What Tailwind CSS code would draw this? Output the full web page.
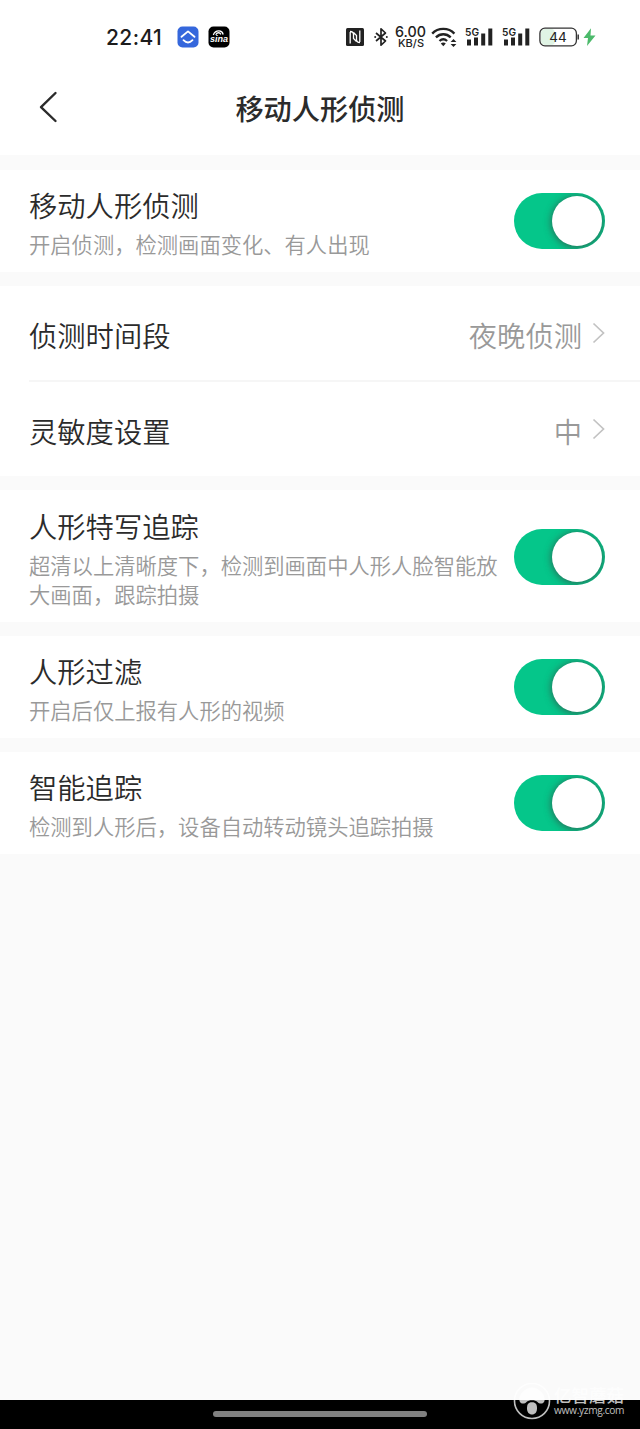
<!DOCTYPE html>
<html lang="zh-CN">
<head>
    <meta charset="UTF-8" />
    <meta name="viewport" content="width=device-width, initial-scale=1.0" />
    <title>移动人形侦测</title>
    <script src="https://cdn.jsdelivr.net/npm/@tailwindcss/browser@4"></script>
</head>
<body class="bg-[#fafafa] font-['Noto_Sans_CJK_SC',sans-serif] font-[350] text-[#2b2b2b]">

<div class="relative w-[640px] h-[1429px] flex flex-col overflow-hidden">

    <!-- Status bar -->
    <div class="h-[74px] shrink-0 bg-white flex items-center pl-[106px] font-['Inter','Liberation_Sans',sans-serif] text-[#1c1c1c]">
        <span class="w-[71px] text-[21px] leading-none font-medium tracking-[0.4px]">22:41</span>
        <svg class="w-[22px] h-[22px]" viewBox="0 0 22 22">
            <rect x="0.5" y="0.5" width="21" height="21" rx="5" fill="#3567dc" />
            <path d="M4.5 10.8 11 5.4l6.5 5.4M6.5 14.2Q11 18.8 15.5 14.2" fill="none" stroke="#fff" stroke-width="1.8" stroke-linecap="round" stroke-linejoin="round" />
        </svg>
        <svg class="ml-[9px] w-[22px] h-[22px]" viewBox="0 0 22 22">
            <rect x="0.5" y="0.5" width="21" height="21" rx="5" fill="#000" />
            <path d="M5.5 8.5C7.5 4 14 3.6 15 8M8 8.3c1.2-2 4-2 4.6-.3" fill="none" stroke="#fff" stroke-width="1.3" stroke-linecap="round" />
            <text x="11" y="15.5" text-anchor="middle" font-family="Liberation Sans" font-size="9" font-weight="700" font-style="italic" fill="#fff">sina</text>
        </svg>

        <svg class="ml-[115px] w-[20px] h-[20px]" viewBox="0 0 20 20">
            <rect x="1" y="1" width="18" height="18" rx="1.5" fill="#222" />
            <path d="M5.2 16.5V5M5 4.5c2.500 0 3.500 1 3.500 3v4l3 3M14.800 3.500V15M15 15.500c-2.500 0-3.500-1-3.500-3v-4l-3-3" fill="none" stroke="#fff" stroke-width="1.3" />
        </svg>
        <svg class="ml-[8px] w-[16px] h-[20px]" viewBox="0 0 16 20">
            <path d="M3 6l9.5 8L8 18.2V1.8L12.5 6 3 14" fill="none" stroke="#222" stroke-width="1.7" stroke-linejoin="round" />
            <circle cx="2.2" cy="10" r="1" fill="#222" />
            <circle cx="13.8" cy="10" r="1" fill="#222" />
        </svg>
        <svg class="ml-[4px] w-[34px] h-[26px]" viewBox="0 0 34 26">
            <text x="2" y="13.2" font-family="Inter" font-size="14.5" font-weight="500" textLength="31" lengthAdjust="spacingAndGlyphs" fill="#222">6.00</text>
            <text x="5" y="23.3" font-family="Inter" font-size="10.5" font-weight="500" textLength="26" lengthAdjust="spacingAndGlyphs" fill="#222">KB/S</text>
        </svg>
        <svg class="ml-[4px] w-[27px] h-[20px]" viewBox="0 0 27 20">
            <path d="M1.2 6.6C7 .4 17.6 .4 23.4 6.6M4.9 10.4c4.3-4.2 10.5-4.2 14.8 0M8.5 14c2.3-2.1 5.3-2.1 7.6 0" fill="none" stroke="#222" stroke-width="2.3" />
            <path d="M12.3 19.2 9.8 16.5c1.5-1.3 3.5-1.3 5 0z" fill="#222" />
            <path d="M22.5 12l2.9 3h-5.800zM22.500 20l-2.900-3h5.800z" fill="#222" />
        </svg>
        <svg class="ml-[7px] w-[30px] h-[20px]" viewBox="0 0 30 20">
            <text x="0" y="8.5" font-family="Inter" font-size="10.5" font-weight="600" textLength="14" lengthAdjust="spacingAndGlyphs" fill="#222">5G</text>
            <path d="M2 12.5h4v6h-4zM9 10.5h4v8h-4zM16.2 6.5h4v12h-4zM23.3 1.5h4v17h-4z" fill="#222" />
        </svg>
        <svg class="ml-[7px] w-[30px] h-[20px]" viewBox="0 0 30 20">
            <text x="0" y="8.5" font-family="Inter" font-size="10.5" font-weight="600" textLength="14" lengthAdjust="spacingAndGlyphs" fill="#222">5G</text>
            <path d="M2 12.5h4v6h-4zM9 10.5h4v8h-4zM16.2 6.5h4v12h-4zM23.3 1.5h4v17h-4z" fill="#222" />
        </svg>
        <svg class="ml-[7px] w-[58px] h-[22px]" viewBox="0 0 58 22">
            <rect x="2" y="3" width="14" height="16" rx="4" fill="#e0f4e5" />
            <rect x="0.9" y="2.2" width="36.5" height="17.6" rx="5" fill="none" stroke="#333" stroke-width="1.3" />
            <path d="M39.2 8.500v5" stroke="#333" stroke-width="1.5" />
            <text x="19" y="15.8" text-anchor="middle" font-family="Inter" font-size="13.5" font-weight="400" fill="#222">44</text>
            <path d="M52 2.2 44.5 12h4.500l-1 8L56.500 9.500h-5z" fill="#4cba6b" />
        </svg>
    </div>

    <!-- Title bar -->
    <div class="h-[81px] shrink-0 bg-white grid grid-cols-[96px_1fr_96px] pb-[14px] items-center">
        <svg class="ml-[38px] mb-[2px] w-[20px] h-[32px]" viewBox="0 0 20 32">
            <path d="M17.5 2 3 16.2 17.5 30" fill="none" stroke="#2b2b2b" stroke-width="2.4" stroke-linecap="round" stroke-linejoin="round" />
        </svg>
        <h1 class="text-center text-[28.2px] leading-[40px] font-medium">移动人形侦测</h1>
    </div>

    <div class="mt-[15px] shrink-0 space-y-[14px]">
        <div class="h-[102px] bg-white flex items-center justify-between pl-[29px] pr-[35px]">
            <div>
                <h2 class="text-[28.3px] leading-[40px]">移动人形侦测</h2>
                <p class="mt-[4px] text-[21.3px] leading-[29px] text-[#999]">开启侦测，检测画面变化、有人出现</p>
            </div>
            <div class="w-[91px] h-[56px] rounded-full bg-[#05c68a] overflow-hidden flex justify-end p-[3px]">
                <div class="size-[50px] rounded-full bg-white shadow-[0_1px_7px_1px_rgba(60,60,60,0.6)]"></div>
            </div>
        </div>

        <div class="h-[190px] bg-white pl-[29px]">
            <div class="h-[96px] pt-[3px] pr-[35px] flex items-center border-b-2 border-[#f6f6f6]">
                <span class="text-[28.3px] leading-[40px]">侦测时间段</span>
                <span class="ml-auto text-[28.3px] leading-[40px] text-[#999]">夜晚侦测</span>
                <svg class="ml-[10px] mb-[3px] w-[13px] h-[22px]" viewBox="0 0 13 22">
                    <path d="M1.5 1.5 11.5 11l-10 9.5" fill="none" stroke="#c2c2c2" stroke-width="1.7" />
                </svg>
            </div>
            <div class="h-[94px] pt-[3px] pr-[35px] flex items-center">
                <span class="text-[28.3px] leading-[40px]">灵敏度设置</span>
                <span class="ml-auto text-[28.3px] leading-[40px] text-[#999]">中</span>
                <svg class="ml-[10px] mb-[3px] w-[13px] h-[22px]" viewBox="0 0 13 22">
                    <path d="M1.5 1.5 11.5 11l-10 9.5" fill="none" stroke="#c2c2c2" stroke-width="1.7" />
                </svg>
            </div>
        </div>

        <div class="h-[132px] pt-[2px] bg-white flex items-center justify-between pl-[29px] pr-[35px]">
            <div class="w-[472px]">
                <h2 class="text-[28.3px] leading-[40px]">人形特写追踪</h2>
                <p class="mt-[4px] text-[21.3px] leading-[29px] text-[#999]">超清以上清晰度下，检测到画面中人形人脸智能放<br>大画面，跟踪拍摄</p>
            </div>
            <div class="w-[91px] h-[56px] rounded-full bg-[#05c68a] overflow-hidden flex justify-end p-[3px]">
                <div class="size-[50px] rounded-full bg-white shadow-[0_1px_7px_1px_rgba(60,60,60,0.6)]"></div>
            </div>
        </div>

        <div class="h-[102px] bg-white flex items-center justify-between pl-[29px] pr-[35px]">
            <div>
                <h2 class="text-[28.3px] leading-[40px]">人形过滤</h2>
                <p class="mt-[4px] text-[21.3px] leading-[29px] text-[#999]">开启后仅上报有人形的视频</p>
            </div>
            <div class="w-[91px] h-[56px] rounded-full bg-[#05c68a] overflow-hidden flex justify-end p-[3px]">
                <div class="size-[50px] rounded-full bg-white shadow-[0_1px_7px_1px_rgba(60,60,60,0.6)]"></div>
            </div>
        </div>

        <div class="h-[102px] bg-white flex items-center justify-between pl-[29px] pr-[35px]">
            <div>
                <h2 class="text-[28.3px] leading-[40px]">智能追踪</h2>
                <p class="mt-[4px] text-[21.3px] leading-[29px] text-[#999]">检测到人形后，设备自动转动镜头追踪拍摄</p>
            </div>
            <div class="w-[91px] h-[56px] rounded-full bg-[#05c68a] overflow-hidden flex justify-end p-[3px]">
                <div class="size-[50px] rounded-full bg-white shadow-[0_1px_7px_1px_rgba(60,60,60,0.6)]"></div>
            </div>
        </div>
    </div>

    <!-- Gesture bar -->
    <div class="mt-auto h-[29px] shrink-0 bg-black flex justify-center pt-[11px]">
        <div class="w-[214px] h-[6px] rounded-full bg-[#808080]"></div>
    </div>

    <!-- Watermark -->
    <div class="absolute right-[16px] bottom-[9px] flex items-center gap-[3px] text-white/75">
        <svg class="w-[38px] h-[38px]" viewBox="0 0 38 38">
            <circle cx="19" cy="19" r="17.5" fill="none" stroke="currentColor" stroke-width="1.6" />
            <path d="M6.5 19C5 13 12 5.500 19 5.500S33 13 31.500 19c-.8 3-5 3.500-7 1-2-2.300-9-2.300-11 0-2 2.500-6.200 2-7-1z" fill="currentColor" />
            <path d="M19 20.300c4 0 5 2.500 5 6.200s-2 6-5 6-5-2.300-5-6 1-6.200 5-6.200z" fill="currentColor" />
        </svg>
        <div class="w-[70px] pb-[2px]">
            <p class="text-[17.5px] leading-[20px] font-medium whitespace-nowrap">亿智蘑菇</p>
            <p class="text-[10.2px] leading-[11px] tracking-[-0.35px] font-['Open_Sans',sans-serif] font-normal whitespace-nowrap">www.yzmg.com</p>
        </div>
    </div>
</div>

</body>
</html>
